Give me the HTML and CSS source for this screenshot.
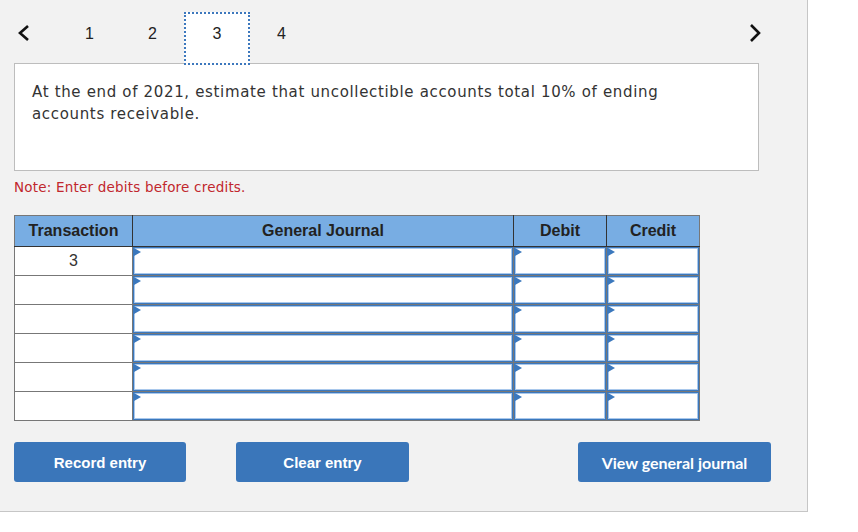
FILE: index.html
```html
<!DOCTYPE html>
<html>
<head>
<meta charset="utf-8">
<link rel="stylesheet" href="styles.css">
</head>
<body>
<div class="panel">
  <div class="tabs">
    <span class="chev chev-left"><svg width="14" height="18" viewBox="0 0 14 18"><polyline points="11,2 3,9 11,16" fill="none" stroke="#111" stroke-width="2.6"/></svg></span>
    <span class="tab">1</span>
    <span class="tab">2</span>
    <span class="tab active">3</span>
    <span class="tab">4</span>
    <span class="spacer"></span>
    <span class="chev chev-right"><svg width="14" height="20" viewBox="0 0 14 20"><polyline points="3,2 11,10 3,18" fill="none" stroke="#111" stroke-width="2.6"/></svg></span>
  </div>
  <div class="question">
    <p class="qtext">At the end of 2021, estimate that uncollectible accounts total 10% of ending accounts receivable.</p>
  </div>
  <p class="note">Note: Enter debits before credits.</p>
  <table class="journal">
    <thead>
      <tr>
        <th class="c-trans">Transaction</th>
        <th class="c-gj">General Journal</th>
        <th class="c-dr">Debit</th>
        <th class="c-cr">Credit</th>
      </tr>
    </thead>
    <tbody>
      <tr><td class="trans">3</td><td class="inp"><div class="field"></div></td><td class="inp"><div class="field"></div></td><td class="inp"><div class="field"></div></td></tr>
      <tr><td class="trans"></td><td class="inp"><div class="field"></div></td><td class="inp"><div class="field"></div></td><td class="inp"><div class="field"></div></td></tr>
      <tr><td class="trans"></td><td class="inp"><div class="field"></div></td><td class="inp"><div class="field"></div></td><td class="inp"><div class="field"></div></td></tr>
      <tr><td class="trans"></td><td class="inp"><div class="field"></div></td><td class="inp"><div class="field"></div></td><td class="inp"><div class="field"></div></td></tr>
      <tr><td class="trans"></td><td class="inp"><div class="field"></div></td><td class="inp"><div class="field"></div></td><td class="inp"><div class="field"></div></td></tr>
      <tr><td class="trans"></td><td class="inp"><div class="field"></div></td><td class="inp"><div class="field"></div></td><td class="inp"><div class="field"></div></td></tr>
    </tbody>
  </table>
  <div class="buttons">
    <button class="btn btn-record">Record entry</button>
    <button class="btn btn-clear">Clear entry</button>
    <span class="spacer"></span>
    <button class="btn btn-view">View general journal</button>
  </div>
</div>
</body>
</html>
```
FILE: styles.css
```css
html, body {
  margin: 0;
  padding: 0;
  background: #ffffff;
}
.panel {
  box-sizing: border-box;
  width: 808px;
  height: 512px;
  background: #f2f2f2;
  border-right: 1px solid #c6c6c6;
  border-bottom: 1px solid #c6c6c6;
  padding: 0 0 0 14px;
}
.tabs {
  display: flex;
  align-items: flex-start;
  height: 65px;
  margin-bottom: -2px;
  padding-top: 12px;
  box-sizing: border-box;
  font-family: "Liberation Sans", Arial, sans-serif;
  font-size: 16px;
  color: #222;
}
.chev {
  display: flex;
  width: 41px;
  padding-top: 12px;
  margin-left: 3px;
}
.chev-right {
  width: auto;
  margin-left: 0;
  margin-right: 45px;
  padding-top: 11px;
}
.tab {
  box-sizing: border-box;
  width: 63px;
  height: 53px;
  text-align: center;
  padding-top: 11px;
  line-height: 18px;
  border: 2px solid transparent;
}
.tab.active {
  width: 66px;
  border: 2px dotted #3d78bd;
  background: #ffffff;
  position: relative;
  z-index: 2;
}
.spacer {
  flex: 1;
}
.question {
  box-sizing: border-box;
  width: 745px;
  height: 108px;
  background: #ffffff;
  border: 1px solid #bdbdbd;
  padding: 17px 17px 0;
}
.qtext {
  margin: 0;
  max-width: 650px;
  font-family: Verdana, "DejaVu Sans", "Noto Sans", sans-serif;
  font-size: 15px;
  letter-spacing: 0.66px;
  line-height: 22px;
  color: #333;
}
.note {
  margin: 8px 0 0;
  font-family: Verdana, "DejaVu Sans", "Noto Sans", sans-serif;
  font-size: 13.5px;
  letter-spacing: 0.2px;
  line-height: 16px;
  color: #c1272d;
}
.journal {
  margin-top: 20px;
  border-collapse: collapse;
  width: 686px;
  font-family: "Liberation Sans", Arial, sans-serif;
  table-layout: fixed;
}
.journal th {
  background: #78ade3;
  height: 30px;
  padding: 0;
  font-size: 16px;
  font-weight: bold;
  color: #222;
  border: 1px solid #333;
  border-top-color: #777;
}
.journal th.c-trans { width: 117px; border-left-color: #777; }
.journal th.c-gj { width: 380px; }
.journal th.c-dr { width: 92px; }
.journal th.c-cr { border-right-color: #777; }
.journal td {
  height: 28px;
  padding: 0;
  border: 1px solid #777;
  background: #ffffff;
}
.journal td.trans {
  text-align: center;
  font-size: 16px;
  color: #333;
  vertical-align: top;
  padding-top: 5px;
  height: 23px;
}
.field {
  box-sizing: border-box;
  height: 28px;
  border: 1px solid #3b78bd;
  box-shadow: inset 0 0 0 1px #a9c8ec;
  background: #ffffff;
  position: relative;
}
.field::before {
  content: "";
  position: absolute;
  left: 0;
  top: 0;
  border-left: 7px solid #3b78bd;
  border-top: 4px solid transparent;
  border-bottom: 4px solid transparent;
}
.buttons {
  display: flex;
  width: 757px;
  margin-top: 21px;
}
.btn {
  height: 40px;
  border: none;
  border-radius: 3px;
  background: #3a76ba;
  color: #ffffff;
  font-family: "Liberation Sans", Arial, sans-serif;
  font-weight: bold;
  font-size: 15px;
  padding: 0;
}
.btn-record { width: 172px; }
.btn-clear { width: 173px; margin-left: 50px; }
.btn-view { width: 193px; font-family: Lato, "Liberation Sans", sans-serif; font-size: 16px; }
```
